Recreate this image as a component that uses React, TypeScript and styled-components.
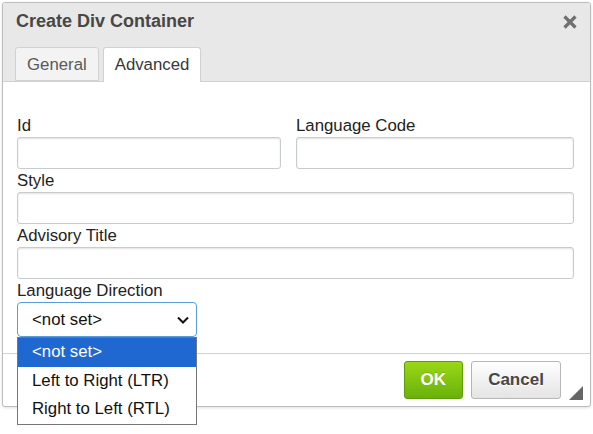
import React from 'react';
import styled, { createGlobalStyle } from 'styled-components';

const GlobalStyle = createGlobalStyle`
  html, body {
    margin: 0;
    padding: 0;
    background: #ffffff;
  }
  body {
    font-family: "Liberation Sans", Arial, sans-serif;
  }
`;

const Page = styled.div`
  padding: 2px;
  width: 593px;
  height: 434px;
  box-sizing: border-box;
`;

const Dialog = styled.div`
  width: 589px;
  height: 405px;
  box-sizing: border-box;
  border: 1px solid #bcbcbc;
  border-radius: 3px;
  background: #ffffff;
  box-shadow: 0 1px 3px rgba(0, 0, 0, 0.12);
  display: flex;
  flex-direction: column;
`;

const Header = styled.div`
  background: #e8e8e8;
  border-bottom: 1px solid #d1d1d1;
  border-radius: 3px 3px 0 0;
  display: flex;
  flex-direction: column;
`;

const TitleRow = styled.div`
  height: 44px;
  display: flex;
  align-items: center;
  justify-content: space-between;
  padding: 0 12px 0 13px;
`;

const Title = styled.div`
  font-size: 18px;
  font-weight: bold;
  color: #474747;
  margin-top: -8px;
`;

const Close = styled.div`
  width: 16px;
  height: 16px;
  margin-top: -7px;
  display: flex;
`;

const Tabs = styled.div`
  display: flex;
  gap: 4px;
  padding-left: 12px;
  height: 34px;
  align-items: flex-end;
`;

const Tab = styled.div<{ $active?: boolean }>`
  height: ${p => (p.$active ? '35px' : '34px')};
  margin-bottom: ${p => (p.$active ? '-1px' : '0')};
  box-sizing: border-box;
  padding: 0 11px;
  display: flex;
  align-items: center;
  font-size: 16.8px;
  color: ${p => (p.$active ? '#383838' : '#595959')};
  background: ${p => (p.$active ? '#ffffff' : '#f3f3f3')};
  border: 1px solid #d1d1d1;
  border-bottom: ${p => (p.$active ? 'none' : '1px solid #d1d1d1')};
  border-radius: 3px 3px 0 0;
  padding-top: ${p => (p.$active ? '0' : '1px')};
`;

const Body = styled.div`
  flex: 1;
  padding: 35px 16px 0 14px;
  display: flex;
  flex-direction: column;
  gap: 3px;
`;

const Row = styled.div`
  display: grid;
  grid-template-columns: 264px 278px;
  column-gap: 15px;
`;

const Field = styled.div`
  display: flex;
  flex-direction: column;
  gap: 2px;
`;

const Label = styled.label`
  font-size: 16.8px;
  color: #222222;
  line-height: 18px;
`;

const Input = styled.div`
  height: 32px;
  box-sizing: border-box;
  border: 1px solid #c9cccf;
  border-radius: 3px;
  background: #ffffff;
  box-shadow: inset 0 1px 2px rgba(0, 0, 0, 0.12);
`;

const SelectWrap = styled.div`
  position: relative;
  width: 180px;
`;

const Select = styled.div`
  height: 35px;
  box-sizing: border-box;
  border: 1px solid #5b9bd8;
  border-radius: 4px;
  background: #ffffff;
  display: flex;
  align-items: center;
  justify-content: space-between;
  padding: 0 6px 0 14px;
  font-size: 16.8px;
  color: #111111;
`;

const Options = styled.div`
  position: absolute;
  left: 0;
  top: 35px;
  width: 180px;
  box-sizing: border-box;
  border: 1px solid #767676;
  background: #ffffff;
  z-index: 5;
`;

const Option = styled.div<{ $selected?: boolean }>`
  height: 28.5px;
  display: flex;
  align-items: center;
  padding-left: 14px;
  font-size: 16.8px;
  color: ${p => (p.$selected ? '#ffffff' : '#111111')};
  background: ${p => (p.$selected ? '#1f68d1' : 'transparent')};
`;

const Footer = styled.div`
  height: 53px;
  box-sizing: border-box;
  border-top: 1px solid #d1d1d1;
  display: flex;
  justify-content: flex-end;
  align-items: flex-start;
  padding: 7px 29px 0 0;
  gap: 8px;
  position: relative;
`;

const Button = styled.div<{ $primary?: boolean }>`
  height: 38px;
  box-sizing: border-box;
  padding: 0 16px;
  display: flex;
  align-items: center;
  justify-content: center;
  font-size: 17px;
  font-weight: bold;
  border-radius: 3px;
  color: ${p => (p.$primary ? '#ffffff' : '#474747')};
  border: 1px solid ${p => (p.$primary ? '#5e9c0c' : '#b6b6b6')};
  background: ${p =>
    p.$primary
      ? 'linear-gradient(to bottom, #9ad717, #69b10b)'
      : 'linear-gradient(to bottom, #ffffff, #e4e4e4)'};
  text-shadow: ${p => (p.$primary ? '0 -1px 0 rgba(0,0,0,0.15)' : '0 1px 0 #fff')};
  min-width: ${p => (p.$primary ? '59px' : '90px')};
`;

const Resize = styled.div`
  position: absolute;
  right: 7px;
  bottom: 6px;
  width: 0;
  height: 0;
  border-style: solid;
  border-width: 0 0 14px 14px;
  border-color: transparent transparent #666666 transparent;
`;

export default function App() {
  return (
    <Page>
      <GlobalStyle />
      <Dialog>
        <Header>
          <TitleRow>
            <Title>Create Div Container</Title>
            <Close>
              <svg width="16" height="16" viewBox="0 0 16 16">
                <path d="M2.5 2.5 L13.5 13.5 M13.5 2.5 L2.5 13.5" stroke="#707070" strokeWidth="3.2" />
              </svg>
            </Close>
          </TitleRow>
          <Tabs>
            <Tab>General</Tab>
            <Tab $active>Advanced</Tab>
          </Tabs>
        </Header>
        <Body>
          <Row>
            <Field>
              <Label>Id</Label>
              <Input />
            </Field>
            <Field>
              <Label>Language Code</Label>
              <Input />
            </Field>
          </Row>
          <Field>
            <Label>Style</Label>
            <Input />
          </Field>
          <Field>
            <Label>Advisory Title</Label>
            <Input />
          </Field>
          <Field>
            <Label>Language Direction</Label>
            <SelectWrap>
              <Select>
                <span>&lt;not set&gt;</span>
                <svg width="14" height="10" viewBox="0 0 14 10">
                  <path d="M2 2.5 L7 7.5 L12 2.5" fill="none" stroke="#111" strokeWidth="2" />
                </svg>
              </Select>
              <Options>
                <Option $selected>&lt;not set&gt;</Option>
                <Option>Left to Right (LTR)</Option>
                <Option>Right to Left (RTL)</Option>
              </Options>
            </SelectWrap>
          </Field>
        </Body>
        <Footer>
          <Button $primary>OK</Button>
          <Button>Cancel</Button>
          <Resize />
        </Footer>
      </Dialog>
    </Page>
  );
}
